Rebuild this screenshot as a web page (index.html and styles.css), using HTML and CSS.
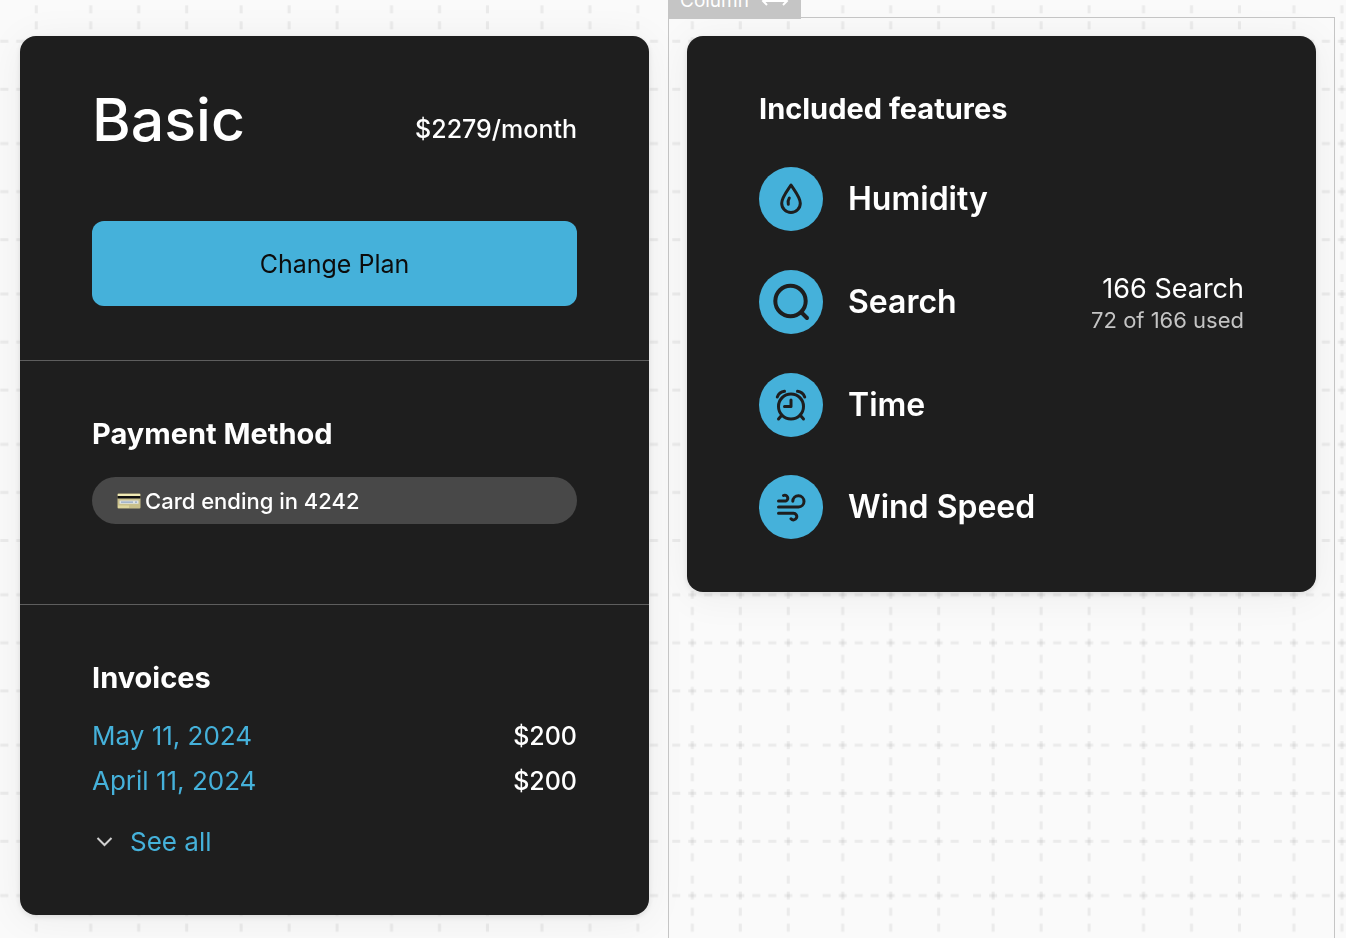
FILE: index.html
```
<!DOCTYPE html>
<html lang="en">
<head>
<meta charset="utf-8">
<title>Plan and billing</title>
<link rel="stylesheet" href="styles.css">
</head>
<body>
<svg class="backdrop" aria-hidden="true">
  <defs>
    <pattern id="dashes" x="-86.7" y="-33.7" width="150.4" height="150.4" patternUnits="userSpaceOnUse">
      <g stroke="#000" stroke-opacity="0.058" stroke-width="3" stroke-dasharray="8 8">
        <path d="M7 27H143M7 75H143M7 123H143"/>
        <path d="M27 7V143M75 7V143M123 7V143"/>
      </g>
    </pattern>
  </defs>
  <rect width="100%" height="100%" fill="url(#dashes)"/>
</svg>
<main class="board">
  <div class="column">
    <article class="card">
      <section class="section plan">
        <div class="row">
          <h1 class="plan-name">Basic</h1>
          <p class="price">$2279/month</p>
        </div>
        <button class="change" type="button">Change Plan</button>
      </section>
      <section class="section payment">
        <h2 class="heading">Payment Method</h2>
        <p class="method">
          <svg class="credit" viewBox="0 0 24 16" aria-hidden="true">
            <rect x="0.5" y="0.5" width="23" height="15" rx="1" fill="#c9c08b"/>
            <path d="M1 1H23V4H1Z" fill="#efe9b4"/>
            <path d="M0.5 3H23.5V5.500H0.500Z" fill="#111"/>
            <path d="M2.500 7.500H21.500V10.800H2.500Z" fill="#dfe3e3"/>
            <path d="M4 9.200H16M18 9.200H20" stroke="#93a8c4" stroke-width="1.200"/>
            <path d="M1 12.500H12V15H1Z" fill="#ded69c"/>
          </svg>
          <span>Card ending in 4242</span>
        </p>
      </section>
      <section class="section invoices">
        <h2 class="heading">Invoices</h2>
        <ul class="invoice-list">
          <li class="invoice"><a class="link" href="#may">May 11, 2024</a><span class="amount">$200</span></li>
          <li class="invoice"><a class="link" href="#april">April 11, 2024</a><span class="amount">$200</span></li>
        </ul>
        <a class="link see-all" href="#all">
          <svg class="chevron" viewBox="0 0 24 24" aria-hidden="true"><path d="M5.500 8L12.500 15L19.500 8"/></svg>
          See all
        </a>
      </section>
    </article>
  </div>
  <div class="column selected">
    <div class="tag">Column
      <svg class="arrows" viewBox="0 0 28 14" aria-hidden="true"><path d="M2 7H26M6 3L2 7L6 11M22 3L26 7L22 11"/></svg>
    </div>
    <article class="card features">
      <h2 class="heading">Included features</h2>
      <ul class="feature-list">
        <li class="feature">
          <span class="badge"><svg class="icon" viewBox="0 0 64 64" aria-hidden="true"><path d="M32 18C28 24 22.700 30.500 22.700 36.200A9.300 9.300 0 0 0 41.300 36.200C41.300 30.500 36 24 32 18Z"/><path d="M30.300 31C29 33 28.800 35 29.300 37.300"/></svg></span>
          <span class="name">Humidity</span>
        </li>
        <li class="feature">
          <span class="badge"><svg class="icon" viewBox="0 0 64 64" aria-hidden="true"><g stroke-width="4"><circle cx="31.500" cy="31" r="15.200"/><path d="M43 43L48 48"/></g></svg></span>
          <span class="name">Search</span>
          <span class="usage"><span class="total">166 Search</span><span class="used">72 of 166 used</span></span>
        </li>
        <li class="feature">
          <span class="badge"><svg class="icon" viewBox="0 0 64 64" aria-hidden="true"><circle cx="32" cy="33.500" r="12.500"/><path d="M32 27V33.500H25.500M22.500 42.500L19.500 46M41.500 42.500L44.500 46M18.300 24C19.500 20.800 22 18.700 25.500 18.300M45.700 24C44.500 20.800 42 18.700 38.500 18.300"/></svg></span>
          <span class="name">Time</span>
        </li>
        <li class="feature">
          <span class="badge"><svg class="icon" viewBox="0 0 64 64" aria-hidden="true"><path d="M19.500 26H27A3 3 0 1 0 24.500 20.500M19.500 32H39.500A5.600 5.600 0 1 0 33.800 26.300M19.500 38.300H34.500A3.300 3.300 0 1 1 32 43.800"/></svg></span>
          <span class="name">Wind Speed</span>
        </li>
      </ul>
    </article>
  </div>
</main>
</body>
</html>
```
FILE: styles.css
```
* {
  box-sizing: border-box;
}

body {
  margin: 0;
  background: #fafafa;
  color: #fff;
  font-family: Inter, "Liberation Sans", sans-serif;
  font-size: 26px;
  line-height: 32px;
}

h1, h2, p, ul {
  margin: 0;
  padding: 0;
}

ul {
  list-style: none;
}

.backdrop {
  position: fixed;
  inset: 0;
  width: 100%;
  height: 100%;
}

.board {
  position: relative;
  display: grid;
  grid-template-columns: 1fr 1fr;
  min-height: 100vh;
  padding: 17px 11px 0 1px;
}

.column {
  padding: 19px 19px 23px;
}

.selected {
  position: relative;
  border: 1px solid #c5c5c5;
  border-bottom: 0;
  padding: 18px;
}

.tag {
  position: absolute;
  bottom: 100%;
  left: -1px;
  display: flex;
  align-items: center;
  gap: 12px;
  margin-bottom: -1px;
  padding: 4px 12px 3px;
  background: #c5c5c5;
  font-size: 19px;
  line-height: 30px;
}

.arrows {
  width: 28px;
  height: 14px;
  fill: none;
  stroke: #fff;
  stroke-width: 2;
}

.card {
  overflow: hidden;
  border-radius: 16px;
  background: #1e1e1e;
  box-shadow: 0 4px 40px rgba(0, 0, 0, 0.06), 0 2px 6px rgba(0, 0, 0, 0.1);
}

.section {
  padding: 55px 72px;
}

.section + .section {
  border-top: 1px solid #5e5e5e;
}

.plan {
  padding: 48px 72px 54px;
}

.row {
  display: flex;
  align-items: flex-end;
  justify-content: space-between;
  margin-bottom: 65px;
}

.plan-name {
  font-size: 59px;
  font-weight: 500;
  line-height: 72px;
}

.price {
  margin-bottom: 11px;
  font-size: 25px;
  font-weight: 500;
}

.change {
  display: block;
  width: 100%;
  height: 85px;
  border: 0;
  border-radius: 12px;
  background: #45b1da;
  color: #0c0c0c;
  font: inherit;
  font-size: 25px;
}

.heading {
  font-size: 29px;
  font-weight: 700;
  line-height: 36px;
}

.payment {
  padding-bottom: 80px;
}

.method {
  display: flex;
  align-items: center;
  gap: 4px;
  height: 47px;
  margin-top: 25px;
  padding: 0 25px;
  border-radius: 24px;
  background: #484848;
  font-size: 22px;
  font-weight: 500;
}

.credit {
  width: 24px;
  height: 16px;
}

.invoices {
  padding-bottom: 57px;
}

.invoice-list {
  display: grid;
  gap: 13px;
  margin: 24px 0 29px;
}

.invoice {
  display: flex;
  justify-content: space-between;
}

.amount {
  font-size: 25px;
  font-weight: 500;
}

.link {
  color: #45b1da;
  text-decoration: none;
}

.see-all {
  display: flex;
  align-items: center;
  gap: 14px;
}

.chevron {
  width: 24px;
  height: 24px;
  fill: none;
  stroke: #d0d0d0;
  stroke-width: 2;
}

.features {
  padding: 55px 72px 53px;
}

.feature-list {
  display: grid;
  gap: 38px;
  margin-top: 40px;
}

.feature {
  display: flex;
  align-items: center;
  gap: 25px;
}

.badge {
  width: 64px;
  height: 64px;
  border-radius: 50%;
  background: #45b1da;
}

.icon {
  display: block;
  width: 64px;
  height: 64px;
  fill: none;
  stroke: #1e1e1e;
  stroke-width: 3;
  stroke-linecap: round;
  stroke-linejoin: round;
}

.name {
  font-size: 32px;
  font-weight: 600;
  line-height: 40px;
}

.usage {
  display: grid;
  margin-left: auto;
  padding-top: 4px;
  text-align: right;
}

.total {
  font-size: 27px;
}

.used {
  color: #c4c4c4;
  font-size: 22px;
  line-height: 30px;
}
```
